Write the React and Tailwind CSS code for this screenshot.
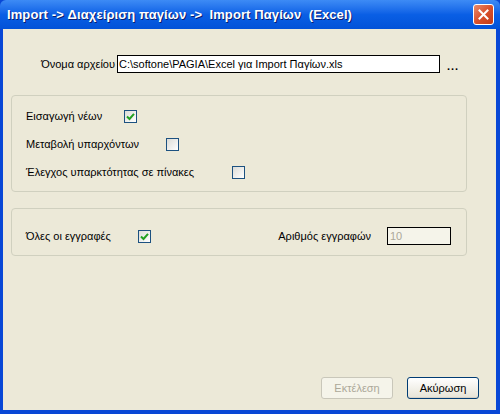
import React from 'react';

// XP-style dialog: Import Παγίων (Excel)

const font = { fontFamily: '"Liberation Sans", Arial, sans-serif' };

const Checkbox = ({ checked }) => (
  <div className="w-[13px] h-[13px] border border-[#1c5180] bg-gradient-to-br from-[#dcdcd7] to-white flex items-center justify-center shrink-0">
    {checked && (
      <svg width="9" height="9" viewBox="0 0 9 9">
        <path d="M1 4.5 L3.5 7 L8 1.8" fill="none" stroke="#21a121" strokeWidth="2" />
      </svg>
    )}
  </div>
);

const Button = ({ children, disabled }) => (
  <div
    className={
      'w-[72px] h-[22px] rounded-[3px] border flex items-center justify-center text-[11px] ' +
      (disabled
        ? 'border-[#c9c7ba] bg-[#f5f4ea] text-[#aca899]'
        : 'border-[#003c74] bg-gradient-to-b from-white to-[#e6e3d6] text-black shadow-[inset_0_-1px_0_#d6d0c5]')
    }
  >
    {children}
  </div>
);

export default function App() {
  return (
    <div className="w-[500px] h-[414px] bg-[#0847d6] flex flex-col text-black" style={font}>
      {/* title bar */}
      <div className="h-[29px] shrink-0 flex items-center pl-[7px] pr-[6px] bg-gradient-to-b from-[#3d8bf5] via-[#0a5fe5] to-[#0252d8] rounded-t-[6px]">
        <span className="text-white font-bold text-[13px] tracking-[0.1px] [text-shadow:1px_1px_0_#0a1e6e]">
          Import -&gt; Διαχείριση παγίων -&gt; &nbsp;Import Παγίων &nbsp;(Excel)
        </span>
        <div className="ml-auto w-[21px] h-[21px] rounded-[3px] border border-white bg-gradient-to-br from-[#e88a6a] via-[#d9502b] to-[#c23b17] flex items-center justify-center">
          <svg width="11" height="11" viewBox="0 0 11 11">
            <path d="M1.5 1.5 L9.5 9.5 M9.5 1.5 L1.5 9.5" stroke="white" strokeWidth="2" strokeLinecap="square" />
          </svg>
        </div>
      </div>

      {/* client area */}
      <div className="flex-1 ml-[3px] mr-[4px] mb-[4px] bg-[#ece9d8] flex flex-col text-[11px]">
        {/* file row */}
        <div className="mt-[26px] flex items-center h-[18px]">
          <div className="w-[114px] text-right pr-[2px]">Όνομα αρχείου</div>
          <div className="w-[323px] h-[18px] border border-black bg-white flex items-center pl-[1px] leading-none">
            C:\softone\PAGIA\Excel για Import Παγίων.xls
          </div>
          <div className="ml-[7px] font-bold tracking-[1px] pt-[4px]">...</div>
        </div>

        {/* group 1 */}
        <div className="mt-[22px] ml-[8px] w-[456px] h-[97px] border border-[#d0d0bf] rounded-[4px] pt-[6px] pl-[14px] flex flex-col">
          <div className="h-[28px] flex items-center">
            <div className="w-[98px]">Εισαγωγή νέων</div>
            <Checkbox checked />
          </div>
          <div className="h-[28px] flex items-center">
            <div className="w-[140px]">Μεταβολή υπαρχόντων</div>
            <Checkbox />
          </div>
          <div className="h-[28px] flex items-center">
            <div className="w-[206px]">Έλεγχος υπαρκτότητας σε πίνακες</div>
            <Checkbox />
          </div>
        </div>

        {/* group 2 */}
        <div className="mt-[16px] ml-[8px] w-[456px] h-[48px] border border-[#d0d0bf] rounded-[4px] pt-[18px] pl-[14px] pr-[15px]">
          <div className="h-[18px] flex items-center">
            <div className="w-[112px]">Όλες οι εγγραφές</div>
            <Checkbox checked />
            <div className="ml-auto">Αριθμός εγγραφών</div>
            <div className="ml-[16px] w-[64px] h-[18px] border border-black bg-[#f5f4ea] text-[#aca899] flex items-center pl-[2px] leading-none">
              10
            </div>
          </div>
        </div>

        {/* buttons */}
        <div className="mt-auto mb-[11px] mr-[17px] flex justify-end gap-[14px]">
          <Button disabled>Εκτέλεση</Button>
          <Button>Ακύρωση</Button>
        </div>
      </div>
    </div>
  );
}
